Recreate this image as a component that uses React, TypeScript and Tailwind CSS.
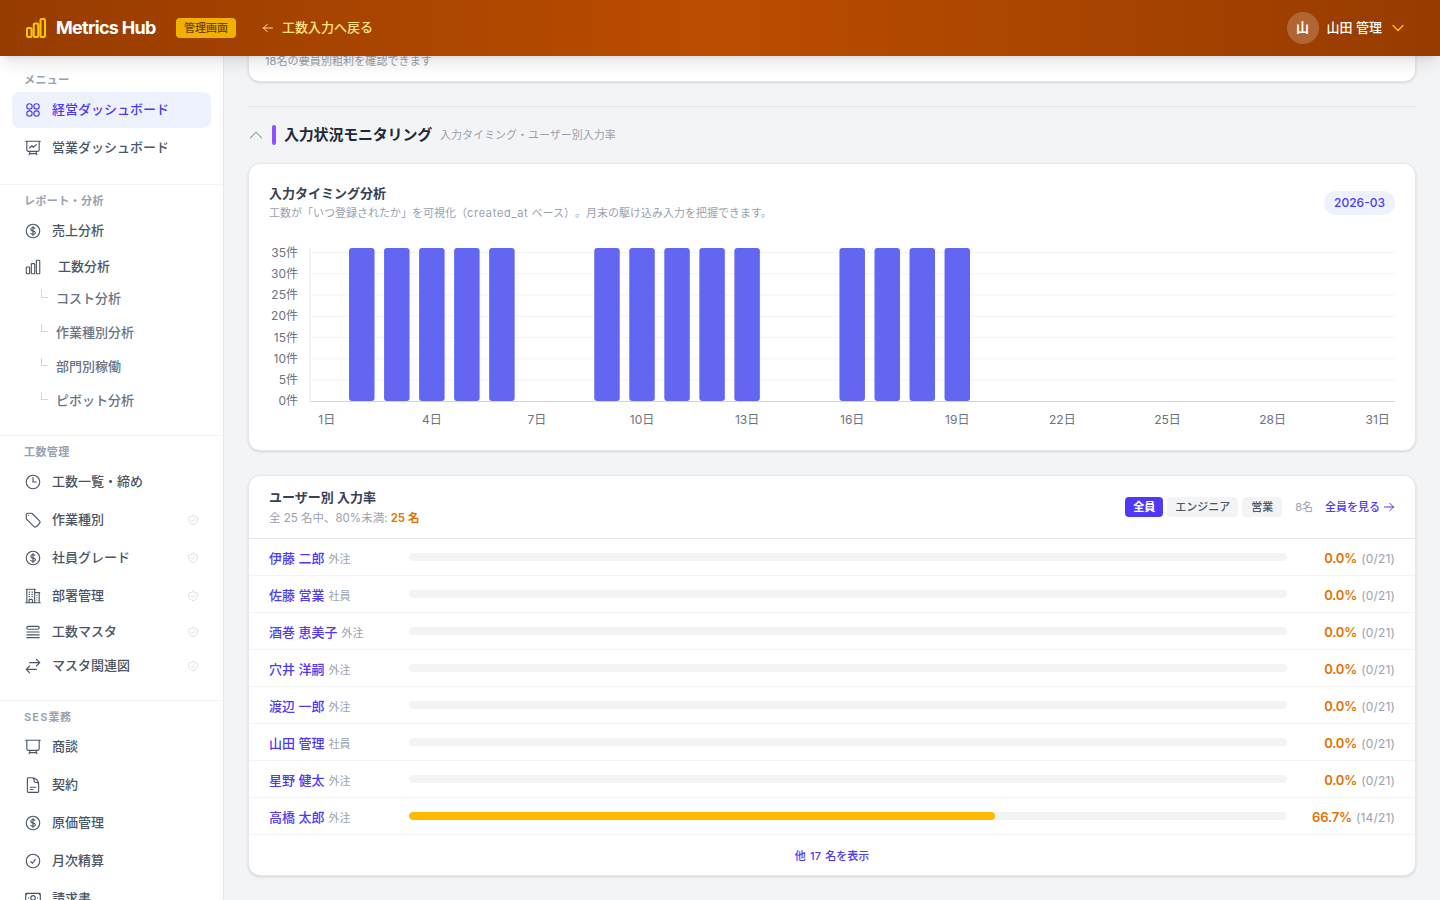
import type { ReactNode } from 'react';
import {
  HiOutlineArrowLeft,
  HiOutlineArrowRight,
  HiOutlineArrowsRightLeft,
  HiOutlineBanknotes,
  HiOutlineBuildingOffice2,
  HiOutlineChartBar,
  HiOutlineCheckCircle,
  HiOutlineChevronDown,
  HiOutlineChevronUp,
  HiOutlineClock,
  HiOutlineCurrencyDollar,
  HiOutlineDocumentText,
  HiOutlinePresentationChartLine,
  HiOutlineQueueList,
  HiOutlineShieldCheck,
  HiOutlineTag,
} from 'react-icons/hi2';

function MeetingIcon({ className }: { className?: string }) {
  return (
    <svg viewBox="0 0 24 24" fill="none" stroke="currentColor" strokeWidth={1.5} strokeLinecap="round" strokeLinejoin="round" className={className}>
      <path d="M3.75 3v11.25A2.25 2.25 0 0 0 6 16.5h2.25M3.75 3h-1.5m1.5 0h16.5m0 0h1.5m-1.5 0v11.25A2.25 2.25 0 0 1 18 16.5h-2.25m-7.5 0h7.5m-7.5 0-1 3m8.5-3 1 3m0 0 .5 1.5m-.5-1.5h-9.5m0 0-.5 1.5" />
    </svg>
  );
}

function DashboardIcon({ className }: { className?: string }) {
  return (
    <svg viewBox="0 0 24 24" fill="none" stroke="currentColor" strokeWidth={1.5} className={className}>
      <circle cx="7.3" cy="7.3" r="3.6" />
      <circle cx="16.7" cy="7.3" r="3.6" />
      <circle cx="7.3" cy="16.7" r="3.6" />
      <circle cx="16.7" cy="16.7" r="3.6" />
    </svg>
  );
}

interface NavItemProps {
  icon: ReactNode;
  label: string;
  active?: boolean;
  admin?: boolean;
  height?: string;
  gap?: string;
}

function NavItem({ icon, label, active, admin, height = 'h-[36px] mb-[2px]', gap = 'gap-[10px]' }: NavItemProps) {
  return (
    <div
      className={`flex items-center rounded-lg px-3 text-[13px] font-medium ${gap} ${height} ${
        active ? 'bg-indigo-50 text-indigo-600' : 'text-gray-600'
      }`}
    >
      {icon}
      <span className="flex-1">{label}</span>
      {admin && <HiOutlineShieldCheck className="size-[12px] text-gray-300" />}
    </div>
  );
}

function SubItem({ label }: { label: string }) {
  return (
    <div className="flex h-[34px] items-center pl-[29px] text-[13px] font-medium text-gray-500">
      <span className="mb-[10px] mr-[8px] h-[8px] w-[7px] border-b border-l border-gray-300" />
      {label}
    </div>
  );
}

function SectionLabel({ children }: { children: ReactNode }) {
  return <p className="px-3 text-[11px] font-semibold leading-[16px] tracking-[0.4px] text-gray-400">{children}</p>;
}

const iconClass = 'size-[18px] shrink-0';

function Sidebar() {
  return (
    <aside className="w-[224px] shrink-0 overflow-hidden border-r border-gray-200 bg-white">
      <div className="border-b border-gray-100 px-3 pb-[16px] pt-[16px]">
        <SectionLabel>メニュー</SectionLabel>
        <div className="mt-[4px]">
          <NavItem active icon={<DashboardIcon className={iconClass} />} label="経営ダッシュボード" />
          <NavItem icon={<HiOutlinePresentationChartLine className={iconClass} />} label="営業ダッシュボード" />
        </div>
      </div>
      <div className="border-b border-gray-100 px-3 pb-[17px] pt-[8px]">
        <SectionLabel>レポート・分析</SectionLabel>
        <div className="mt-[4px]">
          <NavItem icon={<HiOutlineCurrencyDollar className={iconClass} />} label="売上分析" height="h-[36px]" />
          <NavItem icon={<HiOutlineChartBar className={iconClass} />} label="工数分析" gap="gap-[16px]" height="h-[36px] mb-[-3px]" />
          <SubItem label="コスト分析" />
          <SubItem label="作業種別分析" />
          <SubItem label="部門別稼働" />
          <SubItem label="ピボット分析" />
        </div>
      </div>
      <div className="border-b border-gray-100 px-3 pb-[17px] pt-[8px]">
        <SectionLabel>工数管理</SectionLabel>
        <div className="mt-[4px]">
          <NavItem icon={<HiOutlineClock className={iconClass} />} label="工数一覧・締め" />
          <NavItem admin icon={<HiOutlineTag className={iconClass} />} label="作業種別" />
          <NavItem admin icon={<HiOutlineCurrencyDollar className={iconClass} />} label="社員グレード" />
          <NavItem admin icon={<HiOutlineBuildingOffice2 className={iconClass} />} label="部署管理" height="h-[36px]" />
          <NavItem admin icon={<HiOutlineQueueList className={iconClass} />} label="工数マスタ" height="h-[35px]" />
          <NavItem admin icon={<HiOutlineArrowsRightLeft className={iconClass} />} label="マスタ関連図" height="h-[34px]" />
        </div>
      </div>
      <div className="px-3 pt-[8px]">
        <SectionLabel>
          <span className="tracking-[1.2px]">SES</span>業務
        </SectionLabel>
        <div className="mt-[4px]">
          <NavItem icon={<MeetingIcon className={iconClass} />} label="商談" />
          <NavItem icon={<HiOutlineDocumentText className={iconClass} />} label="契約" />
          <NavItem icon={<HiOutlineCurrencyDollar className={iconClass} />} label="原価管理" />
          <NavItem icon={<HiOutlineCheckCircle className={iconClass} />} label="月次精算" />
          <NavItem icon={<HiOutlineBanknotes className={iconClass} />} label="請求書" />
        </div>
      </div>
    </aside>
  );
}

const activeDays = [2, 3, 4, 5, 6, 9, 10, 11, 12, 13, 16, 17, 18, 19];
const yTicks = [35, 30, 25, 20, 15, 10, 5, 0];
const xTicks = [1, 4, 7, 10, 13, 16, 19, 22, 25, 28, 31];

function TimingChart() {
  const dayX = (d: number) => 57.75 + (d - 1) * 35.03;
  return (
    <svg width={1126} height={188} className="mt-[21px] block">
      {yTicks.map((t, i) => {
        const y = 11.5 + i * 21.28;
        return (
          <g key={t}>
            {t > 0 && <line x1={41} x2={1126} y1={y} y2={y} stroke="#f3f4f6" />}
            <text x={29} y={y + 4} textAnchor="end" fontSize={12} fill="#6b7280">
              {t}件
            </text>
          </g>
        );
      })}
      {activeDays.map((d) => (
        <rect key={d} x={dayX(d) - 12.75} y={7} width={25.5} height={153} rx={3} fill="#6366f1" />
      ))}
      <line x1={41} x2={41} y1={7} y2={160.5} stroke="#e5e7eb" />
      <line x1={41} x2={1126} y1={160.5} y2={160.5} stroke="#d1d5db" />
      {xTicks.map((d) => (
        <text key={d} x={dayX(d)} y={183} textAnchor="middle" fontSize={12} fill="#6b7280">
          {d}日
        </text>
      ))}
    </svg>
  );
}

const users = [
  { name: '伊藤 二郎', kind: '外注', pct: 0, count: 0 },
  { name: '佐藤 営業', kind: '社員', pct: 0, count: 0 },
  { name: '酒巻 恵美子', kind: '外注', pct: 0, count: 0 },
  { name: '穴井 洋嗣', kind: '外注', pct: 0, count: 0 },
  { name: '渡辺 一郎', kind: '外注', pct: 0, count: 0 },
  { name: '山田 管理', kind: '社員', pct: 0, count: 0 },
  { name: '星野 健太', kind: '外注', pct: 0, count: 0 },
  { name: '高橋 太郎', kind: '外注', pct: 66.7, count: 14 },
];

function UserRow({ user }: { user: (typeof users)[number] }) {
  return (
    <div className="flex h-[37px] items-center border-b border-gray-100 px-5">
      <div className="w-[140px] shrink-0 truncate">
        <span className="text-[13px] font-medium text-indigo-600">{user.name}</span>
        <span className="ml-[4px] text-[11px] text-gray-400">{user.kind}</span>
      </div>
      <div className="h-[8px] flex-1 overflow-hidden rounded-full bg-gray-100">
        <div className="h-full rounded-full bg-amber-400" style={{ width: `${user.pct}%` }} />
      </div>
      <div className="w-[108px] shrink-0 text-right">
        <span className="text-[13px] font-semibold tracking-[-0.15px] text-amber-600">{user.pct.toFixed(1)}%</span>
        <span className="ml-[4px] text-[12px] tracking-[0.15px] text-gray-400">({user.count}/21)</span>
      </div>
    </div>
  );
}

export default function App() {
  return (
    <div className="flex h-screen flex-col overflow-hidden bg-gray-100 [font-family:Inter,'Noto_Sans_CJK_JP',sans-serif]">
      <header className="relative z-10 flex h-[56px] shrink-0 items-center bg-linear-to-r from-amber-800 via-amber-700 to-amber-800 pl-[24px] pr-[34px] shadow-lg">
        <HiOutlineChartBar strokeWidth={2} className="size-[24px] text-yellow-400" />
        <span className="-mt-[1px] ml-[8px] w-[100px] whitespace-nowrap text-[18px] font-bold tracking-[-0.7px] text-white">Metrics Hub</span>
        <span className="ml-[20px] rounded bg-yellow-500 px-2 py-[2px] text-[11px] font-medium text-yellow-900">管理画面</span>
        <span className="ml-[26px] flex items-center gap-[8px] text-[13px] font-medium text-amber-200">
          <HiOutlineArrowLeft strokeWidth={2} className="size-[12px]" />
          工数入力へ戻る
        </span>
        <div className="ml-auto flex items-center">
          <span className="flex size-[32px] items-center justify-center rounded-full bg-white/20 text-[13px] font-bold text-white">山</span>
          <span className="ml-[8px] text-[13px] font-medium text-white">山田 管理</span>
          <HiOutlineChevronDown strokeWidth={2} className="ml-[8px] size-[16px] text-yellow-400" />
        </div>
      </header>
      <div className="flex min-h-0 flex-1">
        <Sidebar />
        <main className="min-w-0 flex-1 overflow-hidden px-6">
          <div className="-mt-[30px] h-[56px] rounded-xl border border-gray-200 bg-white px-[16px] pt-[26px] text-[11px] leading-[16px] tracking-[0.1px] text-gray-400 shadow-sm">
            18名の要員別粗利を確認できます
          </div>
          <div className="mt-[24px] border-t border-gray-200" />
          <div className="flex h-[56px] items-center">
            <HiOutlineChevronUp className="-ml-[1px] size-[18px] text-gray-400" />
            <span className="ml-[7px] h-[20px] w-[4px] rounded-full bg-violet-500" />
            <h2 className="ml-[8px] text-[15px] font-bold tracking-[-0.2px] text-gray-800">入力状況モニタリング</h2>
            <span className="ml-[8px] text-[11px] text-gray-400">入力タイミング・ユーザー別入力率</span>
          </div>
          <section className="h-[288px] rounded-xl border border-gray-200 bg-white px-5 pt-[20px] shadow-sm">
            <div className="flex h-[36px] items-start justify-between">
              <div>
                <h3 className="text-[13px] font-semibold leading-[18px] text-gray-700">入力タイミング分析</h3>
                <p className="mt-[2px] text-[11px] leading-[18px] text-gray-400 [text-spacing-trim:space-all]">
                  工数が「いつ登録されたか」を可視化（<span className="tracking-[0.7px]">created_at</span> ベース）。月末の駆け込み入力を把握できます。
                </p>
              </div>
              <span className="mt-[7px] rounded-full bg-indigo-50 px-[10px] py-[4px] text-[12px] font-medium leading-[16px] text-indigo-600">2026-03</span>
            </div>
            <TimingChart />
          </section>
          <section className="mt-[24px] rounded-xl border border-gray-200 bg-white shadow-sm">
            <div className="flex h-[63px] items-center justify-between border-b border-gray-200 px-5">
              <div>
                <h3 className="text-[13px] font-semibold leading-[18px] text-gray-700">ユーザー別 入力率</h3>
                <p className="mt-[3px] text-[11.5px] leading-[18px] text-gray-400">
                  全 25 名中、80%未満: <span className="font-semibold text-amber-600">25 名</span>
                </p>
              </div>
              <div className="flex items-center">
                <div className="flex gap-[4px]">
                  <span className="rounded bg-indigo-600 px-2 py-[2px] text-[11px] font-bold text-white">全員</span>
                  <span className="rounded bg-gray-100 px-2 py-[2px] text-[11px] font-medium text-gray-600">エンジニア</span>
                  <span className="rounded bg-gray-100 px-[9px] py-[2px] text-[11px] font-medium text-gray-600">営業</span>
                </div>
                <span className="ml-[13px] text-[11px] text-gray-400">8名</span>
                <span className="ml-[12px] flex items-center gap-[3px] text-[11px] font-medium text-indigo-600">
                  全員を見る
                  <HiOutlineArrowRight strokeWidth={2} className="size-[12px]" />
                </span>
              </div>
            </div>
            {users.map((u) => (
              <UserRow key={u.name} user={u} />
            ))}
            <div className="flex h-[40px] items-center justify-center pt-[2px] text-[11px] font-medium text-indigo-600 [word-spacing:1.5px]">他 17 名を表示</div>
          </section>
        </main>
      </div>
    </div>
  );
}
